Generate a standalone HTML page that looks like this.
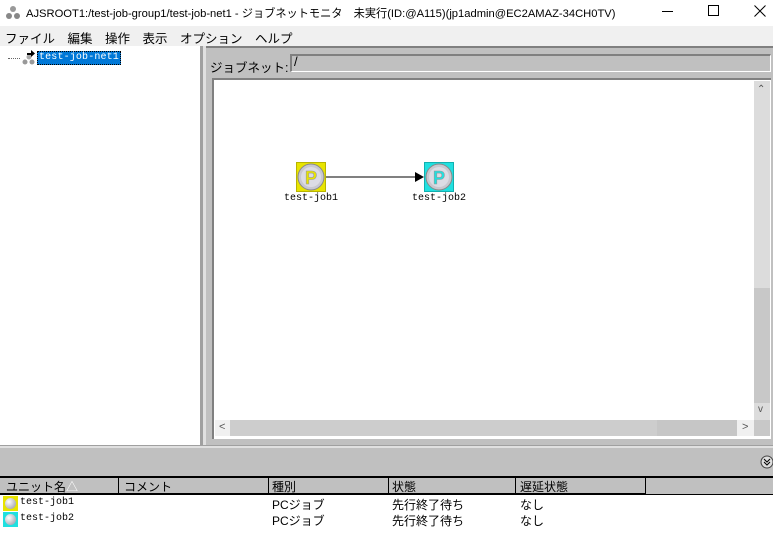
<!DOCTYPE html>
<html><head><meta charset="utf-8"><style>
*{margin:0;padding:0;box-sizing:border-box}
body{width:773px;height:547px;overflow:hidden;background:#fff;font-family:"Liberation Sans","Noto Sans CJK JP",sans-serif;position:relative}
.a{position:absolute}
.t{font-size:12px;color:#000;white-space:nowrap}
.m{font-family:"Liberation Mono","Noto Sans CJK JP",monospace;font-size:10px;white-space:nowrap}
</style></head><body>
<div class="a" style="left:0;top:0;width:773px;height:25px;background:#fff"></div>
<svg class="a" style="left:5px;top:5px" width="16" height="16"><circle cx="8" cy="4" r="3" fill="#999"/><circle cx="4" cy="11" r="3" fill="#888"/><circle cx="12" cy="11" r="3" fill="#888"/></svg>
<div class="a t" style="left:26px;top:5px;font-size:11.2px">AJSROOT1:/test-job-group1/test-job-net1 - ジョブネットモニタ　未実行(ID:@A115)(jp1admin@EC2AMAZ-34CH0TV)</div>
<div class="a" style="left:662px;top:11px;width:11px;height:1px;background:#000"></div>
<div class="a" style="left:708px;top:5px;width:11px;height:11px;border:1px solid #000"></div>
<svg class="a" style="left:754px;top:5px" width="12" height="12"><path d="M0.5 0.5L11.5 11.5M11.5 0.5L0.5 11.5" stroke="#000"/></svg>
<div class="a" style="left:0;top:26px;width:773px;height:20px;background:#f0f0f0"></div>
<div class="a t" style="left:5px;top:28px;font-size:12.5px">ファイル　編集　操作　表示　オプション　ヘルプ</div>
<div class="a" style="left:0;top:47px;width:200px;height:398px;background:#fff"></div>
<div class="a" style="left:8px;top:58px;width:12px;border-top:1px dotted #666"></div>
<svg class="a" style="left:20px;top:49px" width="16" height="16"><circle cx="9" cy="8" r="2.5" fill="#aaa"/><circle cx="5" cy="13" r="2.5" fill="#999"/><circle cx="12" cy="13" r="2.5" fill="#999"/><path d="M7 4h4V1l4 3.5-4 3.5V6H7z" fill="#000"/></svg>
<div class="a m" style="left:37px;top:51px;background:#0078d7;color:#fff;padding:0 1px;border:1px dotted #000;height:14px;line-height:12px;font-size:10px;letter-spacing:0.15px">test-job-net1</div>
<div class="a" style="left:200px;top:46px;width:573px;height:399px;background:#c0c0c0"></div>
<div class="a" style="left:200px;top:46px;width:3px;height:399px;background:#a0a0a0"></div>
<div class="a" style="left:203px;top:46px;width:3px;height:399px;background:#e0e0e0"></div>
<div class="a" style="left:206px;top:46px;width:567px;height:2px;background:#808080"></div>
<div class="a t" style="left:210px;top:57px;font-size:12.5px">ジョブネット:</div>
<div class="a" style="left:290px;top:54px;width:481px;height:18px;background:#c0c0c0;border-top:2px solid #808080;border-left:2px solid #808080;border-bottom:1px solid #fff;border-right:1px solid #fff"></div>
<div class="a" style="left:294px;top:54px;font-size:13px">/</div>
<div class="a" style="left:212px;top:78px;width:559px;height:2px;background:#808080"></div>
<div class="a" style="left:212px;top:78px;width:2px;height:361px;background:#808080"></div>
<div class="a" style="left:214px;top:80px;width:557px;height:359px;background:#fff;border-right:2px solid #fff;border-bottom:2px solid #fff"></div>
<div class="a" style="left:754px;top:81px;width:16px;height:339px;background:#dcdcdc"></div>
<div class="a" style="left:754px;top:288px;width:16px;height:115px;background:#c8c8c8"></div>
<div class="a" style="left:757px;top:84px;font-size:10px;color:#555">⌃</div>
<div class="a" style="left:758px;top:404px;font-size:10px;color:#555">v</div>
<div class="a" style="left:215px;top:420px;width:539px;height:16px;background:#f0f0f0"></div>
<div class="a" style="left:230px;top:420px;width:427px;height:16px;background:#cdcdcd"></div>
<div class="a" style="left:657px;top:420px;width:80px;height:16px;background:#c6c6c6"></div>
<div class="a" style="left:754px;top:420px;width:16px;height:16px;background:#c8c8c8"></div>
<div class="a" style="left:219px;top:421px;font-size:11px;color:#555">&lt;</div>
<div class="a" style="left:742px;top:421px;font-size:11px;color:#555">&gt;</div>
<div class="a" style="left:296px;top:162px;width:30px;height:30px;background:#e8e400;border:1px solid #b8b400"></div>
<svg class="a" style="left:296px;top:162px" width="30" height="30"><circle cx="15" cy="15" r="13" fill="#c8c8d0" stroke="#888"/><circle cx="15" cy="15" r="10" fill="#dcdce4"/><text x="9" y="22" font-size="18" font-weight="bold" fill="#e8e400" stroke="#999" stroke-width="0.6" font-family="Liberation Sans">P</text></svg>
<div class="a" style="left:424px;top:162px;width:30px;height:30px;background:#20e0e0;border:1px solid #10b0b0"></div>
<svg class="a" style="left:424px;top:162px" width="30" height="30"><circle cx="15" cy="15" r="13" fill="#c8c8d0" stroke="#888"/><circle cx="15" cy="15" r="10" fill="#dcdce4"/><text x="9" y="22" font-size="18" font-weight="bold" fill="#20e0e0" stroke="#999" stroke-width="0.6" font-family="Liberation Sans">P</text></svg>
<svg class="a" style="left:326px;top:170px" width="100" height="14"><path d="M0 7H90" stroke="#000"/><path d="M89 2L98 7L89 12z" fill="#000"/></svg>
<div class="a m" style="left:284px;top:193px">test-job1</div>
<div class="a m" style="left:412px;top:193px">test-job2</div>
<div class="a" style="left:0;top:445px;width:773px;height:3px;background:#e0e0e0;border-top:1px solid #a0a0a0"></div>
<div class="a" style="left:0;top:448px;width:773px;height:28px;background:#c0c0c0"></div>
<svg class="a" style="left:760px;top:455px" width="13" height="14"><circle cx="7" cy="7" r="6" fill="#ddd" stroke="#444"/><path d="M4 4l3 3 3-3M4 7l3 3 3-3" stroke="#000" fill="none"/></svg>
<div class="a" style="left:0;top:476px;width:773px;height:2px;background:#000"></div>
<div class="a" style="left:0;top:478px;width:773px;height:16px;background:#c0c0c0"></div>
<div class="a" style="left:0;top:493px;width:645px;height:2px;background:#000"></div>
<div class="a" style="left:645px;top:494px;width:128px;height:1px;background:#000"></div>
<div class="a" style="left:118px;top:478px;width:1px;height:16px;background:#000"></div>
<div class="a" style="left:268px;top:478px;width:1px;height:16px;background:#000"></div>
<div class="a" style="left:388px;top:478px;width:1px;height:16px;background:#000"></div>
<div class="a" style="left:515px;top:478px;width:1px;height:16px;background:#000"></div>
<div class="a" style="left:645px;top:478px;width:1px;height:16px;background:#000"></div>
<div class="a t" style="left:6px;top:478px">ユニット名<span style="color:#fff">△</span></div>
<div class="a t" style="left:124px;top:478px">コメント</div>
<div class="a t" style="left:272px;top:478px">種別</div>
<div class="a t" style="left:392px;top:478px">状態</div>
<div class="a t" style="left:520px;top:478px">遅延状態</div>
<div class="a" style="left:3px;top:496px;width:15px;height:15px;background:#e8e400"></div>
<div class="a" style="left:3px;top:512px;width:15px;height:15px;background:#20e0e0"></div>
<div class="a" style="left:5px;top:498px;width:11px;height:11px;border-radius:50%;background:radial-gradient(circle at 35% 35%,#fff,#9090a0)"></div>
<div class="a" style="left:5px;top:514px;width:11px;height:11px;border-radius:50%;background:radial-gradient(circle at 35% 35%,#fff,#9090a0)"></div>
<div class="a m" style="left:20px;top:497px">test-job1</div>
<div class="a m" style="left:20px;top:513px">test-job2</div>
<div class="a t" style="left:272px;top:496px">PCジョブ</div>
<div class="a t" style="left:272px;top:512px">PCジョブ</div>
<div class="a t" style="left:392px;top:496px">先行終了待ち</div>
<div class="a t" style="left:392px;top:512px">先行終了待ち</div>
<div class="a t" style="left:520px;top:496px">なし</div>
<div class="a t" style="left:520px;top:512px">なし</div>
</body></html>
